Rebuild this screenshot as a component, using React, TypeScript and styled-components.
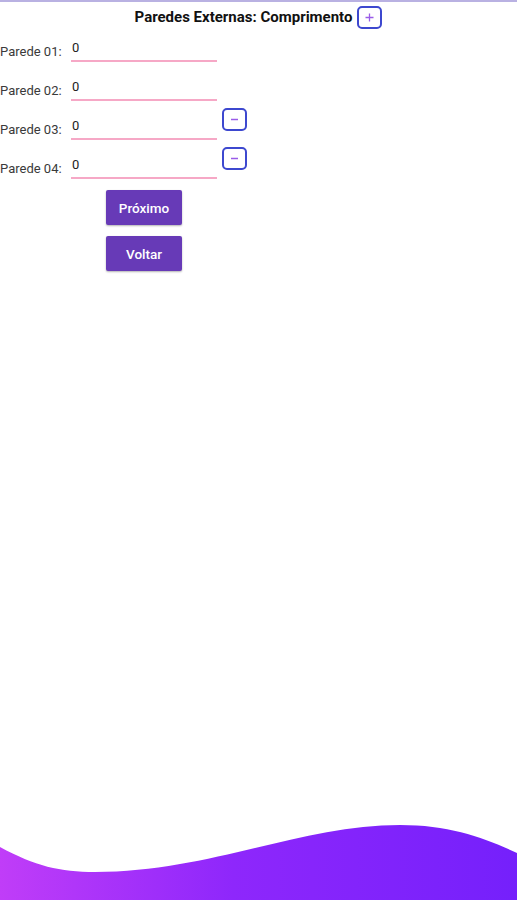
import React, { useState } from 'react';
import styled, { createGlobalStyle } from 'styled-components';

const GlobalStyle = createGlobalStyle`
  html, body {
    margin: 0;
    padding: 0;
    background: #ffffff;
    font-family: Roboto, "Liberation Sans", sans-serif;
  }
`;

const Screen = styled.div`
  position: relative;
  width: 517px;
  height: 900px;
  overflow: hidden;
  border-top: 2px solid #b9b1e2;
  box-sizing: border-box;
`;

const Header = styled.div`
  display: flex;
  justify-content: center;
  align-items: center;
  gap: 5px;
  padding-top: 3px;
  height: 24px;
`;

const Title = styled.h1`
  margin: 0;
  font-size: 15px;
  font-weight: 700;
  color: #111;
`;

const IconButton = styled.button`
  width: 25px;
  height: 23px;
  padding: 0;
  border: 2px solid #3d48cf;
  border-radius: 5px;
  background: #fff;
  color: #9a5ce8;
  display: flex;
  align-items: center;
  justify-content: center;
  cursor: pointer;
`;

const Form = styled.div`
  display: flex;
  flex-direction: column;
  gap: 15px;
  padding-top: 9px;
`;

const Row = styled.div`
  display: flex;
  align-items: flex-end;
  height: 24px;
`;

const Label = styled.label`
  width: 71px;
  font-size: 13px;
  color: #3a3a3a;
  padding-bottom: 3px;
`;

const Input = styled.input`
  width: 146px;
  height: 22px;
  box-sizing: border-box;
  border: none;
  border-bottom: 2px solid #f6a8c6;
  padding: 0 1px 5px;
  font-family: Roboto, "Liberation Sans", sans-serif;
  font-size: 13px;
  color: #222;
  outline: none;
  background: transparent;
`;

const RemoveSlot = styled.div`
  margin-left: 5px;
  align-self: flex-start;
  margin-top: -8px;
`;

const Actions = styled.div`
  width: 288px;
  display: flex;
  flex-direction: column;
  align-items: center;
  gap: 11px;
  margin-top: 11px;
`;

const PrimaryButton = styled.button`
  width: 76px;
  height: 35px;
  border: none;
  border-radius: 2px;
  background: #673ab7;
  color: #fff;
  font-family: Roboto, "Liberation Sans", sans-serif;
  font-size: 13.5px;
  font-weight: 500;
  box-shadow: 0 1px 2px rgba(0, 0, 0, 0.3);
  cursor: pointer;
`;

const Wave = styled.svg`
  position: absolute;
  left: 0;
  bottom: 0;
  width: 517px;
  height: 76px;
  display: block;
`;

const Plus = () => (
  <svg width="11" height="11" viewBox="0 0 11 11">
    <path d="M5.5 1.5v8M1.5 5.5h8" stroke="currentColor" strokeWidth="1.3" />
  </svg>
);

const Minus = () => (
  <svg width="11" height="11" viewBox="0 0 11 11">
    <path d="M2 5.5h7" stroke="currentColor" strokeWidth="1.5" />
  </svg>
);

const App = () => {
  const [walls, setWalls] = useState<string[]>(['0', '0', '0', '0']);

  const addWall = () => setWalls((prev) => [...prev, '0']);
  const removeWall = (index: number) =>
    setWalls((prev) => prev.filter((_, i) => i !== index));

  return (
    <>
      <GlobalStyle />
      <Screen>
        <Header>
          <Title>Paredes Externas: Comprimento</Title>
          <IconButton onClick={addWall}>
            <Plus />
          </IconButton>
        </Header>
        <Form>
          {walls.map((value, index) => (
            <Row key={index}>
              <Label>Parede {String(index + 1).padStart(2, '0')}:</Label>
              <Input
                value={value}
                onChange={(e) =>
                  setWalls((prev) => prev.map((v, i) => (i === index ? e.target.value : v)))
                }
              />
              {index >= 2 && (
                <RemoveSlot>
                  <IconButton onClick={() => removeWall(index)}>
                    <Minus />
                  </IconButton>
                </RemoveSlot>
              )}
            </Row>
          ))}
        </Form>
        <Actions>
          <PrimaryButton>Próximo</PrimaryButton>
          <PrimaryButton>Voltar</PrimaryButton>
        </Actions>
        <Wave viewBox="0 0 517 76" preserveAspectRatio="none">
          <defs>
            <linearGradient id="waveFill" x1="0" y1="0" x2="1" y2="0">
              <stop offset="0" stopColor="#c03df8" />
              <stop offset="0.45" stopColor="#8e27fb" />
              <stop offset="1" stopColor="#7520fb" />
            </linearGradient>
          </defs>
          <path
            d="M0 23 C 35 42, 60 48, 95 48 C 210 48, 300 1, 400 1 C 450 1, 485 14, 517 29 L 517 76 L 0 76 Z"
            fill="url(#waveFill)"
          />
        </Wave>
      </Screen>
    </>
  );
};

export default App;
